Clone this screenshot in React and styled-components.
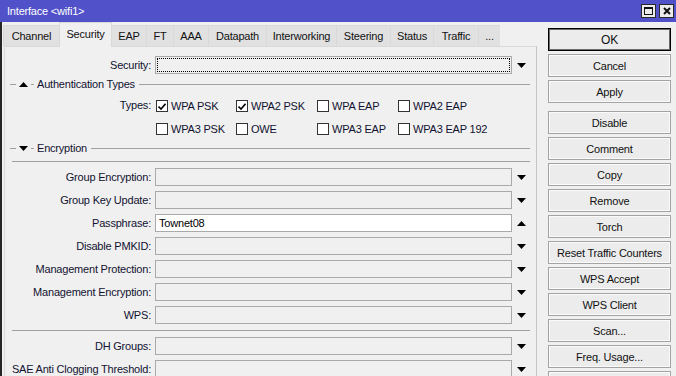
import styled, { createGlobalStyle } from "styled-components";

const tabs = [
  ["Channel", 56],
  ["Security", 53],
  ["EAP", 35],
  ["FT", 27],
  ["AAA", 35],
  ["Datapath", 58],
  ["Interworking", 70],
  ["Steering", 54],
  ["Status", 43],
  ["Traffic", 45],
  ["...", 22],
];

const types = [
  ["WPA PSK", true],
  ["WPA2 PSK", true],
  ["WPA EAP", false],
  ["WPA2 EAP", false],
  ["WPA3 PSK", false],
  ["OWE", false],
  ["WPA3 EAP", false],
  ["WPA3 EAP 192", false],
];

const encryption = [
  { label: "Group Encryption" },
  { label: "Group Key Update" },
  { label: "Passphrase", value: "Townet08", open: true },
  { label: "Disable PMKID" },
  { label: "Management Protection" },
  { label: "Management Encryption" },
  { label: "WPS" },
];

const dh = [{ label: "DH Groups" }, { label: "SAE Anti Clogging Threshold" }];

const actions = [
  "Cancel",
  "Apply",
  "Disable",
  "Comment",
  "Copy",
  "Remove",
  "Torch",
  "Reset Traffic Counters",
  "WPS Accept",
  "WPS Client",
  "Scan...",
  "Freq. Usage...",
  "",
];

const Arrow = ({ up }) => (
  <svg width="9" height="5" viewBox="0 0 9 5">
    <path d={up ? "M0 5 L4.5 0 L9 5 Z" : "M0 0 L9 0 L4.5 5 Z"} fill="#000" />
  </svg>
);

const Tick = () => (
  <svg width="8" height="7" viewBox="0 0 8 7">
    <path d="M0.5 3.5 L3 6 L7.5 0.8" stroke="#000" strokeWidth="1.6" fill="none" />
  </svg>
);

const FieldRow = ({ label, value, open, focus }) => (
  <Row>
    <Label>{label}:</Label>
    <Input $white={!!value}>
      {focus ? <FocusRing /> : value}
    </Input>
    <ArrowCell>
      <Arrow up={open} />
    </ArrowCell>
  </Row>
);

// expanded sections show an up arrow, collapsed ones a down arrow
const SectionHeader = ({ title, expanded, top }) => (
  <Header $top={top}>
    <Dash $w={6} />
    <Arrow up={expanded} />
    <Dash $w={3} />
    <HeaderText>{title}</HeaderText>
    <HeaderLine />
  </Header>
);

const App = () => {
  return (
    <>
      <Global />
      <Window>
        <TitleBar>
          <Title>Interface &lt;wifi1&gt;</Title>
          <TitleButtons>
            <TitleBtn>
              <MaxIcon />
            </TitleBtn>
            <TitleBtn>
              <svg width="8" height="8" viewBox="0 0 8 8">
                <path d="M1 1 L7 7 M7 1 L1 7" stroke="#111" strokeWidth="2" />
              </svg>
            </TitleBtn>
          </TitleButtons>
        </TitleBar>

        <Body>
          <Main>
            <TabBar>
              {tabs.map(([name, w]) => (
                <Tab key={name} $w={w} $active={name === "Security"}>
                  {name}
                </Tab>
              ))}
            </TabBar>

            <Panel>
              <FieldRow label="Security" focus />

              <SectionHeader title="Authentication Types" expanded top={3} />
              <Row $top={5}>
                <Label>Types:</Label>
                <CheckGrid>
                  {types.map(([name, on]) => (
                    <CheckItem key={name}>
                      <Box>{on && <Tick />}</Box>
                      {name}
                    </CheckItem>
                  ))}
                </CheckGrid>
              </Row>

              <SectionHeader title="Encryption" top={2} />
              <Separator />
              <Fields>
                {encryption.map(f => (
                  <FieldRow key={f.label} {...f} />
                ))}
              </Fields>
              <Separator />
              <Fields>
                {dh.map(f => (
                  <FieldRow key={f.label} {...f} />
                ))}
              </Fields>
            </Panel>
          </Main>

          <Sidebar>
            <Button $default>OK</Button>
            {actions.map((a, i) => (
              <Button key={i} $gap={a === "Apply"}>
                {a}
              </Button>
            ))}
          </Sidebar>
        </Body>
      </Window>
    </>
  );
};

export default App;

/* ---------- STYLES ---------- */

const Global = createGlobalStyle`
  html, body {
    margin: 0;
    padding: 0;
    background: #f0f0f0;
    overflow: hidden;
  }
  body {
    font-family: "Liberation Sans", Arial, sans-serif;
    font-size: 11px;
    letter-spacing: -0.2px;
    color: #121230;
  }
`;

const Window = styled.div`
  width: 676px;
  height: 376px;
  overflow: hidden;
  display: flex;
  flex-direction: column;
  background: #f0f0f0;
`;

const TitleBar = styled.div`
  height: 22px;
  flex: none;
  display: flex;
  align-items: center;
  padding-left: 7px;
  background: #5151c9;
  color: #fff;
`;

const Title = styled.span`
  font-size: 11px;
`;

const TitleButtons = styled.div`
  margin-left: auto;
  display: flex;
  gap: 3px;
  padding-right: 2px;
`;

const TitleBtn = styled.div`
  width: 15px;
  height: 14px;
  box-sizing: border-box;
  border: 1px solid #2a2a2a;
  background: #ececec;
  display: flex;
  align-items: center;
  justify-content: center;
`;

const MaxIcon = styled.div`
  width: 9px;
  height: 8px;
  box-sizing: border-box;
  border: 1px solid #111;
  border-top-width: 2px;
`;

const Body = styled.div`
  flex: 1;
  display: flex;
  border-left: 2px solid #262626;
  min-height: 0;
`;

const Main = styled.div`
  width: 535px;
  flex: none;
  display: flex;
  flex-direction: column;
`;

const TabBar = styled.div`
  height: 26px;
  display: flex;
  align-items: flex-end;
  padding-left: 1px;
`;

const Tab = styled.div`
  width: ${p => p.$w}px;
  height: ${p => (p.$active ? 25 : 21)}px;
  box-sizing: border-box;
  display: flex;
  align-items: center;
  justify-content: center;
  padding-bottom: ${p => (p.$active ? 3 : 0)}px;
  border: 1px solid #d9d9d9;
  border-bottom: none;
  border-right: none;
  background: ${p => (p.$active ? "#f0f0f0" : "#e1e1e1")};
  color: #111;
  position: relative;
  z-index: ${p => (p.$active ? 1 : 0)};
  margin-bottom: ${p => (p.$active ? -1 : 0)}px;
  ${p => p.$active && "border-right: 1px solid #d9d9d9; margin-right: -1px;"}
`;

const Panel = styled.div`
  flex: 1;
  margin-left: 2px;
  padding-top: 9px;
  border: 1px solid #d9d9d9;
  border-right-color: #c4c4c4;
  border-bottom: none;
  background: #f0f0f0;
`;

const Row = styled.div`
  display: grid;
  grid-template-columns: 150px 357px 24px;
  align-items: start;
  margin-top: ${p => p.$top || 0}px;
`;

const Label = styled.div`
  height: 18px;
  line-height: 18px;
  padding-right: 4px;
  text-align: right;
  white-space: nowrap;
`;

const Input = styled.div`
  height: 18px;
  box-sizing: border-box;
  border: 1px solid #a9a9a9;
  background: ${p => (p.$white ? "#fff" : "#f0f0f0")};
  padding: 1px 3px;
  display: flex;
  align-items: center;
  color: #000;
`;

const FocusRing = styled.div`
  flex: 1;
  align-self: stretch;
  margin: 0 -2px;
  border: 1px dotted #000;
`;

const ArrowCell = styled.div`
  height: 18px;
  display: flex;
  align-items: center;
  padding-left: 5px;
`;

const Fields = styled.div`
  display: flex;
  flex-direction: column;
  gap: 5px;
  margin-top: 6px;
`;

const Header = styled.div`
  height: 14px;
  margin-top: ${p => p.$top}px;
  display: flex;
  align-items: center;
  gap: 3px;
  padding: 0 6px 0 5px;
`;

const Dash = styled.div`
  width: ${p => p.$w}px;
  height: 1px;
  background: #a0a0a0;
`;

const HeaderText = styled.span`
  white-space: nowrap;
  padding-right: 1px;
`;

const HeaderLine = styled.div`
  flex: 1;
  height: 1px;
  background: #a0a0a0;
`;

const Separator = styled.div`
  height: 1px;
  margin: 6px 6px 0 7px;
  background: #a0a0a0;
`;

const CheckGrid = styled.div`
  grid-column: 2 / 4;
  display: grid;
  grid-template-columns: 80px 81px 81px auto;
  grid-auto-rows: 20px;
  row-gap: 3px;
  padding-left: 1px;
`;

const CheckItem = styled.div`
  display: flex;
  align-items: center;
  gap: 3px;
  white-space: nowrap;
`;

const Box = styled.div`
  width: 12px;
  height: 12px;
  box-sizing: border-box;
  border: 1px solid #333;
  background: #fff;
  display: flex;
  align-items: center;
  justify-content: center;
`;

const Sidebar = styled.div`
  flex: 1;
  display: flex;
  flex-direction: column;
  padding: 6px 0 0 11px;
`;

const Button = styled.div`
  width: 123px;
  height: 23px;
  flex: none;
  box-sizing: border-box;
  margin-bottom: ${p => (p.$gap ? 8 : 3)}px;
  display: flex;
  align-items: center;
  justify-content: center;
  border: 1px solid ${p => (p.$default ? "#000" : "#a3a3a3")};
  box-shadow: ${p => (p.$default ? "inset 0 0 0 1px #6b6b6b" : "inset 0 0 0 1px #fbfbfb")};
  background: #ececec;
  color: #111;
  font-size: ${p => (p.$default ? 12 : 11)}px;
  white-space: nowrap;
`;
